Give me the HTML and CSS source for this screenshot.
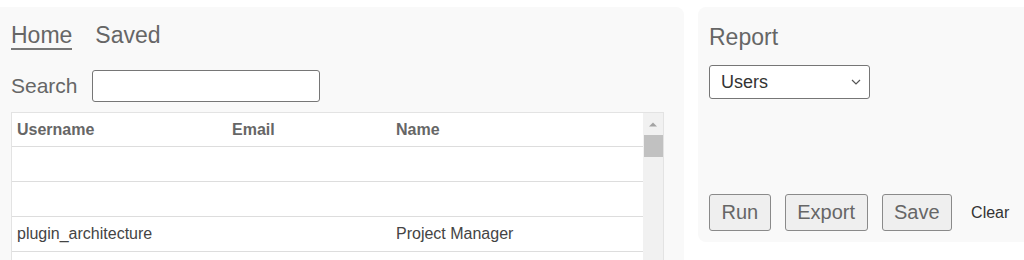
FILE: index.html
```html
<!DOCTYPE html>
<html lang="en">
<head>
    <meta charset="UTF-8">
    <meta name="viewport" content="width=device-width, initial-scale=1.0">
    <title>Users</title>
    <link rel="stylesheet" href="styles.css">
</head>
<body>
    <div class="main">
        <!--tabs-->
        <div class="tabs">
            <a class="tab active">Home</a>
            <a class="tab">Saved</a>
        </div>
        <!--search-->
        <div class="search">
            <label for="q">Search</label>
            <input type="text" id="q">
        </div>

        <div class="grid">
            <div class="rows">
                <table>
                    <thead>
                        <tr>
                            <th class="c1">Username</th>
                            <th class="c2">Email</th>
                            <th>Name</th>
                        </tr>
                    </thead>
                    <tbody id="tbldata">
                        <tr><td></td><td></td><td></td></tr>
                        <tr><td></td><td></td><td></td></tr>
                        <tr><td>plugin_architecture</td><td></td><td>Project Manager</td></tr>
                        <tr><td></td><td></td><td></td></tr>
                        <tr><td></td><td></td><td></td></tr>
                    </tbody>
                </table>
            </div>
            <!--scrollbar-->
            <div class="scrollbar">
                <svg class="arrow" width="20" height="21" viewBox="0 0 20 21">
                    <path d="M6 13.5 L10 9.5 L14 13.5 Z" fill="#a3a3a3"/>
                </svg>
                <div class="thumb"></div>
            </div>
        </div>
    </div>

    <div class="side">
        <h2>Report</h2>
        <select class="report">
            <option>Users</option>
            <option>Groups</option>
        </select>
        <div class="actions">
            <button type="button" class="btn">Run</button>
            <button type="button" class="btn">Export</button>
            <button type="button" class="btn">Save</button>
            <button type="button" class="link">Clear</button>
        </div>
    </div>
</body>
</html>
```

FILE: styles.css
```css
body {
    margin: 0;
    font-family: 'Liberation Sans', Arial, sans-serif;
    background-color: #fff;
    display: flex;
    gap: 14px;
    padding-top: 7px;
    height: 300px;
    overflow: hidden;
    color: #666;
}

.main {
    flex-shrink: 0;
    width: 653px;
    padding: 15px 20px 0 11px;
    background-color: #f9f9f9;
    border-top-right-radius: 8px;
}

.tabs {
    display: flex;
    gap: 23px;
    font-size: 23px;
    line-height: 26px;
}

.tab {
    color: #666;
    cursor: pointer;
}

.tab.active {
    border-bottom: 2px solid #777;
}

.search {
    display: flex;
    align-items: center;
    gap: 14px;
    margin-top: 20px;
    font-size: 21px;
}

.search input {
    width: 228px;
    height: 32px;
    box-sizing: border-box;
    border: 1px solid #767676;
    border-radius: 3px;
    background: #fff;
    font-size: 16px;
}

.grid {
    margin-top: 10px;
    height: 240px;
    display: flex;
    border: 1px solid #e3e3e3;
    background-color: #fff;
}

.rows {
    flex: 1;
    overflow: hidden;
}

.scrollbar {
    width: 20px;
    background-color: #f1f1f1;
    display: flex;
    flex-direction: column;
    align-items: center;
}

.arrow {
    display: block;
}

.thumb {
    width: 19px;
    height: 22px;
    margin-top: 1px;
    background-color: #c1c1c1;
}

table {
    width: 100%;
    border-collapse: collapse;
    font-size: 16px;
}

th, td {
    height: 34px;
    padding: 0 5px;
    text-align: left;
    border-bottom: 1px solid #ddd;
}

th {
    height: 33px;
    color: #666;
    font-weight: bold;
}

td {
    color: #444;
}

.c1 {
    width: 205px;
}

.c2 {
    width: 154px;
}

.side {
    flex: 1;
    height: 235px;
    box-sizing: border-box;
    padding: 17px 11px 11px 11px;
    background-color: #f9f9f9;
    border-radius: 8px 0 0 8px;
    display: flex;
    flex-direction: column;
    align-items: flex-start;
}

.side h2 {
    margin: 0;
    font-size: 23px;
    line-height: 26px;
    font-weight: normal;
    color: #666;
}

.report {
    appearance: none;
    margin-top: 15px;
    width: 161px;
    height: 34px;
    font-family: 'Liberation Sans', Arial, sans-serif;
    font-size: 18px;
    color: #333;
    padding-left: 11px;
    border: 1px solid #767676;
    border-radius: 3px;
    background-color: #fff;
    background-image: url("data:image/svg+xml;utf8,<svg xmlns='http://www.w3.org/2000/svg' width='10' height='6'><path d='M1 1 L5 5 L9 1' fill='none' stroke='%23555' stroke-width='1.2'/></svg>");
    background-repeat: no-repeat;
    background-position: right 8px center;
}

.actions {
    margin-top: auto;
    display: flex;
    align-items: center;
    gap: 14px;
}

.btn {
    font-family: 'Liberation Sans', Arial, sans-serif;
    font-size: 20px;
    line-height: 23px;
    padding: 6px 11.5px;
    color: #666;
    background-color: #efefef;
    border: 1px solid #8a8a8a;
    border-radius: 3px;
    cursor: pointer;
}

.link {
    font-family: 'Liberation Sans', Arial, sans-serif;
    font-size: 16px;
    color: #333;
    background: none;
    border: none;
    padding: 4px 5px;
    cursor: pointer;
}
```
